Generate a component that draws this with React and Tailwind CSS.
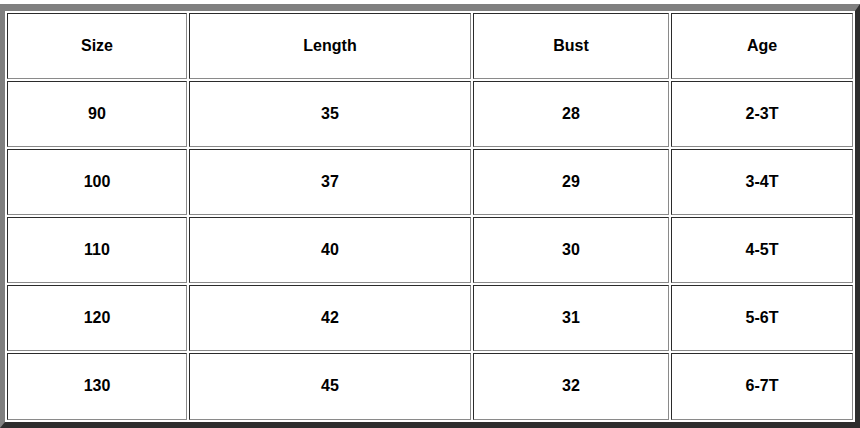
import React from "react";

const headers = ["Size", "Length", "Bust", "Age"];

const rows = [
  ["90", "35", "28", "2-3T"],
  ["100", "37", "29", "3-4T"],
  ["110", "40", "30", "4-5T"],
  ["120", "42", "31", "5-6T"],
  ["130", "45", "32", "6-7T"],
];

function Cell({ children }) {
  return (
    <div className="flex items-center justify-center pb-[1px] border border-t-[#2b2b2b] border-l-[#2b2b2b] border-r-[#8a8a8a] border-b-[#8a8a8a] bg-white text-[16px] font-bold text-black">
      {children}
    </div>
  );
}

export default function App() {
  return (
    <div
      className="w-[860px] h-[428px] overflow-hidden bg-white pt-[4px]"
      style={{ fontFamily: '"Liberation Sans", Arial, sans-serif' }}
    >
      <div className="border-l-[5px] border-t-[7px] border-r-[5px] border-b-[6px] border-l-[#808080] border-t-[#808080] border-r-[#2d2d2d] border-b-[#2d2d2d] p-[2px]">
        <div className="grid grid-cols-[180px_282px_196px_182px] grid-rows-[66px_66px_66px_66px_66px_67px] gap-[2px]">
          {headers.map((h) => (
            <Cell key={h}>{h}</Cell>
          ))}
          {rows.map((r, i) =>
            r.map((v, j) => <Cell key={`${i}-${j}`}>{v}</Cell>)
          )}
        </div>
      </div>
    </div>
  );
}
